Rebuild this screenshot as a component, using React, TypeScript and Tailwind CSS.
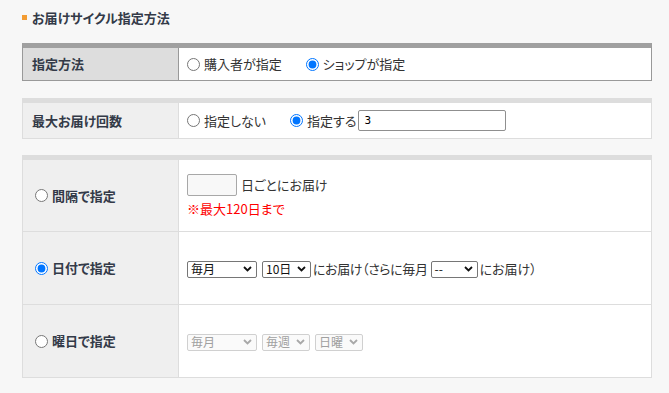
import React from 'react';

const font = {
  fontFamily: '"Noto Sans CJK JP", "Noto Sans", sans-serif',
  fontFeatureSettings: '"palt"',
};

function Radio({ checked, name }: { checked?: boolean; name: string }) {
  return (
    <input
      type="radio"
      name={name}
      defaultChecked={checked}
      className="m-0 h-[13px] w-[13px] shrink-0 accent-[#0075ff]"
    />
  );
}

function Chevron({ color }: { color: string }) {
  return (
    <svg width="9" height="6" viewBox="0 0 9 6" className="shrink-0">
      <path d="M1 1 L4.5 4.5 L8 1" fill="none" stroke={color} strokeWidth="1.8" />
    </svg>
  );
}

function FakeSelect({ label, width, disabled }: { label: string; width: string; disabled?: boolean }) {
  return (
    <div
      className={`flex h-[17px] shrink-0 items-center justify-between rounded-[2px] border pl-[3px] pr-[4px] text-[12px] leading-none ${width} ${
        disabled ? 'border-[#d0d0d0] bg-[#fafafa] text-[#a0a0a0]' : 'border-[#767676] bg-white text-[#111]'
      }`}
    >
      <span>{label}</span>
      <Chevron color={disabled ? '#a8a8a8' : '#111'} />
    </div>
  );
}

export default function App() {
  return (
    <div className="min-h-[393px] w-full bg-[#f7f7f7] pb-[13px] pl-[22px] pr-[17px] pt-[10px] text-[#333]" style={font}>
      <div className="flex h-[15px] items-center gap-[5px]">
        <span className="h-[5px] w-[5px] bg-[#f39c33]" />
        <h2 className="text-[13px] font-bold text-[#333a48]">お届けサイクル指定方法</h2>
      </div>

      {/* 指定方法 */}
      <div className="mt-[18px] border border-t-[5px] border-[#999] border-t-[#a0a0a0]">
        <div className="flex h-[32px]">
          <div className="flex w-[156px] shrink-0 items-center border-r border-[#999] bg-[#dddddd] pl-[9px] text-[13px] font-bold text-[#333a48]">
            指定方法
          </div>
          <div className="flex flex-1 items-center bg-white pl-[8px] text-[13px]">
            <label className="flex items-center gap-[4px]">
              <Radio name="method" />
              <span>購入者が指定</span>
            </label>
            <label className="ml-[24px] flex items-center gap-[4px]">
              <Radio name="method" checked />
              <span>ショップが指定</span>
            </label>
          </div>
        </div>
      </div>

      {/* 最大お届け回数 */}
      <div className="mt-[17px] border border-t-[5px] border-[#dddddd]">
        <div className="flex h-[35px]">
          <div className="flex w-[156px] shrink-0 items-center border-r border-[#dddddd] bg-[#efefef] pl-[9px] text-[13px] font-bold text-[#333a48]">
            最大お届け回数
          </div>
          <div className="flex flex-1 items-center bg-white pl-[8px] text-[13px]">
            <label className="flex items-center gap-[4px]">
              <Radio name="max" />
              <span>指定しない</span>
            </label>
            <label className="ml-[24px] flex items-center gap-[4px]">
              <Radio name="max" checked />
              <span>指定する</span>
            </label>
            <input
              type="text"
              defaultValue="3"
              className="ml-[2px] h-[21px] w-[148px] rounded-[2px] border border-[#8f8f8f] bg-white px-[5px] text-[11px] text-black outline-none"
              style={{ fontFamily: '"DejaVu Sans Mono", monospace' }}
            />
          </div>
        </div>
      </div>

      {/* 詳細指定 */}
      <div className="mt-[16px] border border-t-[5px] border-[#dddddd]">
        <div className="flex h-[72px] border-b border-[#dddddd]">
          <div className="flex w-[156px] shrink-0 items-center gap-[4px] border-r border-[#dddddd] bg-[#efefef] pl-[12px] text-[13px] font-bold text-[#333a48]">
            <Radio name="cycle" />
            <span>間隔で指定</span>
          </div>
          <div className="flex flex-1 flex-col justify-start bg-white pl-[8px] pt-[14px] text-[13px]">
            <div className="flex items-center gap-[4px]">
              <input
                type="text"
                className="h-[22px] w-[50px] rounded-[2px] border border-[#a8a8a8] bg-[#f8f8f8] outline-none"
              />
              <span>日ごとにお届け</span>
            </div>
            <div className="mt-[3px] text-[13px] text-[#ff0000]">※最大120日まで</div>
          </div>
        </div>

        <div className="flex h-[73px] border-b border-[#dddddd]">
          <div className="flex w-[156px] shrink-0 items-center gap-[4px] border-r border-[#dddddd] bg-[#efefef] pl-[12px] text-[13px] font-bold text-[#333a48]">
            <Radio name="cycle" checked />
            <span>日付で指定</span>
          </div>
          <div className="flex flex-1 items-center bg-white pl-[8px] pt-[2px] text-[13px]">
            <FakeSelect label="毎月" width="w-[70px]" />
            <div className="ml-[5px]">
              <FakeSelect label="10日" width="w-[49px]" />
            </div>
            <span className="ml-[2px] tracking-[-0.4px]">にお届け（さらに毎月</span>
            <div className="ml-[3px]">
              <FakeSelect label="--" width="w-[47px]" />
            </div>
            <span className="ml-[2px]">にお届け）</span>
          </div>
        </div>

        <div className="flex h-[72px]">
          <div className="flex w-[156px] shrink-0 items-center gap-[4px] border-r border-[#dddddd] bg-[#efefef] pl-[12px] text-[13px] font-bold text-[#333a48]">
            <Radio name="cycle" />
            <span>曜日で指定</span>
          </div>
          <div className="flex flex-1 items-center gap-[5px] bg-white pl-[8px] pt-[2px] text-[13px]">
            <FakeSelect label="毎月" width="w-[70px]" disabled />
            <FakeSelect label="毎週" width="w-[48px]" disabled />
            <FakeSelect label="日曜" width="w-[48px]" disabled />
          </div>
        </div>
      </div>
    </div>
  );
}
